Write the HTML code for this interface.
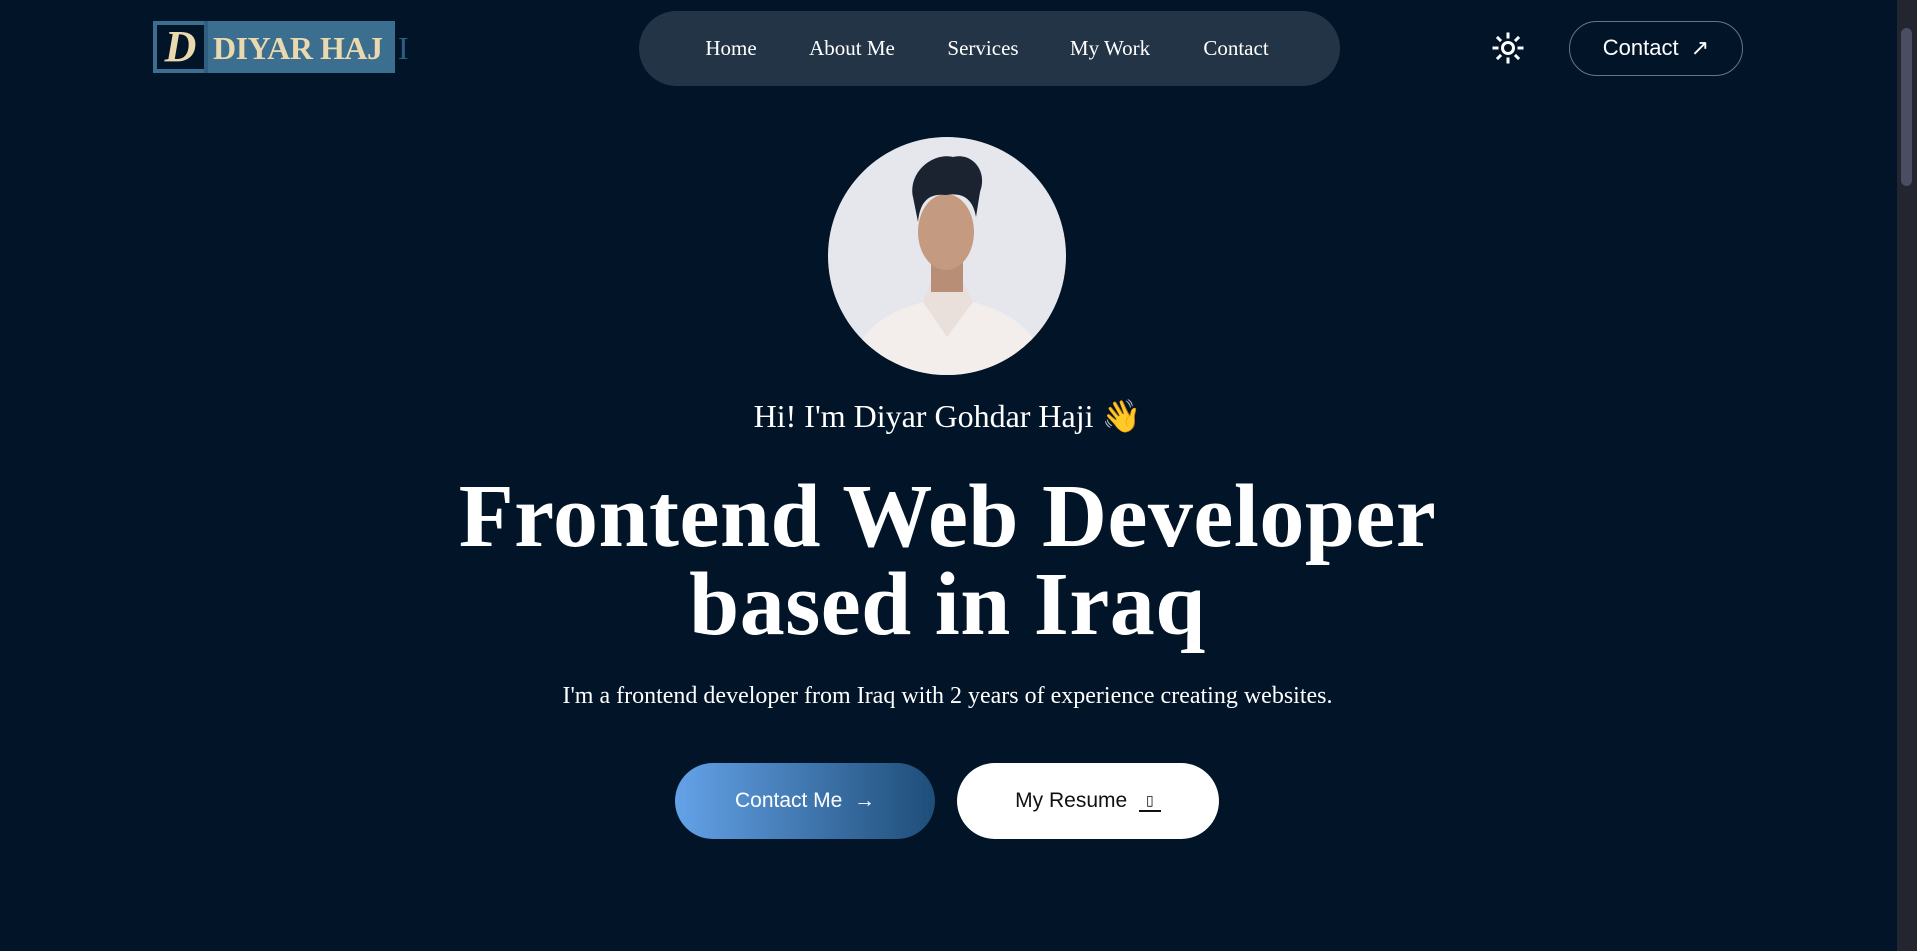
<!DOCTYPE html>
<html><head><meta charset="utf-8">
<style>
*{margin:0;padding:0;box-sizing:border-box}
html,body{width:1917px;height:951px;overflow:hidden;background:#011428;color:#fff;font-family:"Liberation Serif",serif}
.abs{position:absolute}
.logo{left:153px;top:21px;width:242px;height:52px;background:#3b6e8f}
.logo .sq{position:absolute;left:4px;top:4px;width:47px;height:44px;background:#011428}
.logo .sep{position:absolute;left:51px;top:0;width:4px;height:52px;background:#2f5f80}
.logo .d{position:absolute;left:4px;top:0;width:47px;height:52px;text-align:center;font:italic bold 44px/52px "Liberation Serif",serif;color:#ead9ae}
.logo .t{position:absolute;left:60px;top:0;font:bold 32px/54px "Liberation Serif",serif;color:#ead9ae;white-space:nowrap;letter-spacing:-0.5px}
.logoI{left:398px;top:21px;font:32px/54px "Liberation Serif",serif;color:#2c5f80}
.nav{left:639px;top:11px;width:701px;height:75px;border-radius:38px;background:#243447}
.nav span{position:absolute;top:0;line-height:75px;font-size:21px;transform:translateX(-50%);white-space:nowrap}
.cbtn{left:1569px;top:21px;width:174px;height:55px;border:1.5px solid #6b7483;border-radius:28px;font:22px/52px "Liberation Sans",sans-serif;text-align:center}
.hi{left:0;width:1895px;top:393px;text-align:center;font-size:32px;line-height:46px}
.h1{left:0;width:1895px;top:473px;text-align:center;font-size:90px;font-weight:bold;line-height:88px;letter-spacing:0.5px}
.p{left:0;width:1895px;top:681px;text-align:center;font-size:24px;line-height:30px}
.b1{left:675px;top:763px;width:260px;height:76px;border-radius:38px;background:linear-gradient(90deg,#64a2e8,#1e4d78);font:21px/76px "Liberation Sans",sans-serif;text-align:center}
.b2{left:957px;top:763px;width:262px;height:76px;border-radius:38px;background:#fff;color:#111;font:21px/76px "Liberation Sans",sans-serif;text-align:center}
.sb{left:1897px;top:0;width:20px;height:951px;background:#23252f}
.th{left:1901px;top:28px;width:11px;height:158px;border-radius:6px;background:#4b4e62}
</style></head><body>
<div class="abs logo"><div class="sq"></div><div class="sep"></div><div class="d">D</div><div class="t">DIYAR HAJ</div></div>
<div class="abs logoI">I</div>
<div class="abs nav">
<span style="left:92px">Home</span><span style="left:213px">About Me</span><span style="left:344px">Services</span><span style="left:471px">My Work</span><span style="left:597px">Contact</span>
</div>
<svg class="abs" style="left:1492px;top:32px" width="32" height="32" viewBox="0 0 32 32" fill="none" stroke="#fff" stroke-width="3" stroke-linecap="square">
<circle cx="16" cy="16" r="5.5"/>
<path d="M16 2v3M16 27v3M2 16h3M27 16h3M6 6l2 2M24 24l2 2M26 6l-2 2M6 26l2-2"/>
</svg>
<div class="abs cbtn">Contact&nbsp;&nbsp;↗</div>
<svg class="abs" style="left:828px;top:137px" width="238" height="238" viewBox="0 0 238 238">
<defs><clipPath id="c"><circle cx="119" cy="119" r="119"/></clipPath></defs>
<g clip-path="url(#c)">
<rect width="238" height="238" fill="#e6e7ec"/>
<path d="M20 238 C30 190 60 175 95 165 L119 175 L145 165 C180 175 210 190 220 238Z" fill="#f3eeec"/>
<path d="M95 165 L119 200 L145 165 L135 145 L103 145Z" fill="#e9dfdb"/>
<rect x="103" y="115" width="32" height="40" fill="#b98e76"/>
<ellipse cx="118" cy="95" rx="28" ry="38" fill="#c49a80"/>
<path d="M85 60 C80 35 105 15 125 20 C145 15 160 35 152 55 L148 80 C145 62 135 55 118 58 C100 56 92 65 90 85 Z" fill="#1b2230"/>
</g></svg>
<div class="abs hi">Hi! I'm Diyar Gohdar Haji 👋</div>
<div class="abs h1">Frontend Web Developer<br>based in Iraq</div>
<div class="abs p">I'm a frontend developer from Iraq with 2 years of experience creating websites.</div>
<div class="abs b1">Contact Me&nbsp;&nbsp;→</div>
<div class="abs b2">My Resume&nbsp;&nbsp;<span style="display:inline-block;width:22px;border-bottom:2px solid #111;line-height:20px;font-size:14px;vertical-align:middle">▯</span></div>
<div class="abs sb"></div><div class="abs th"></div>
</body></html>
